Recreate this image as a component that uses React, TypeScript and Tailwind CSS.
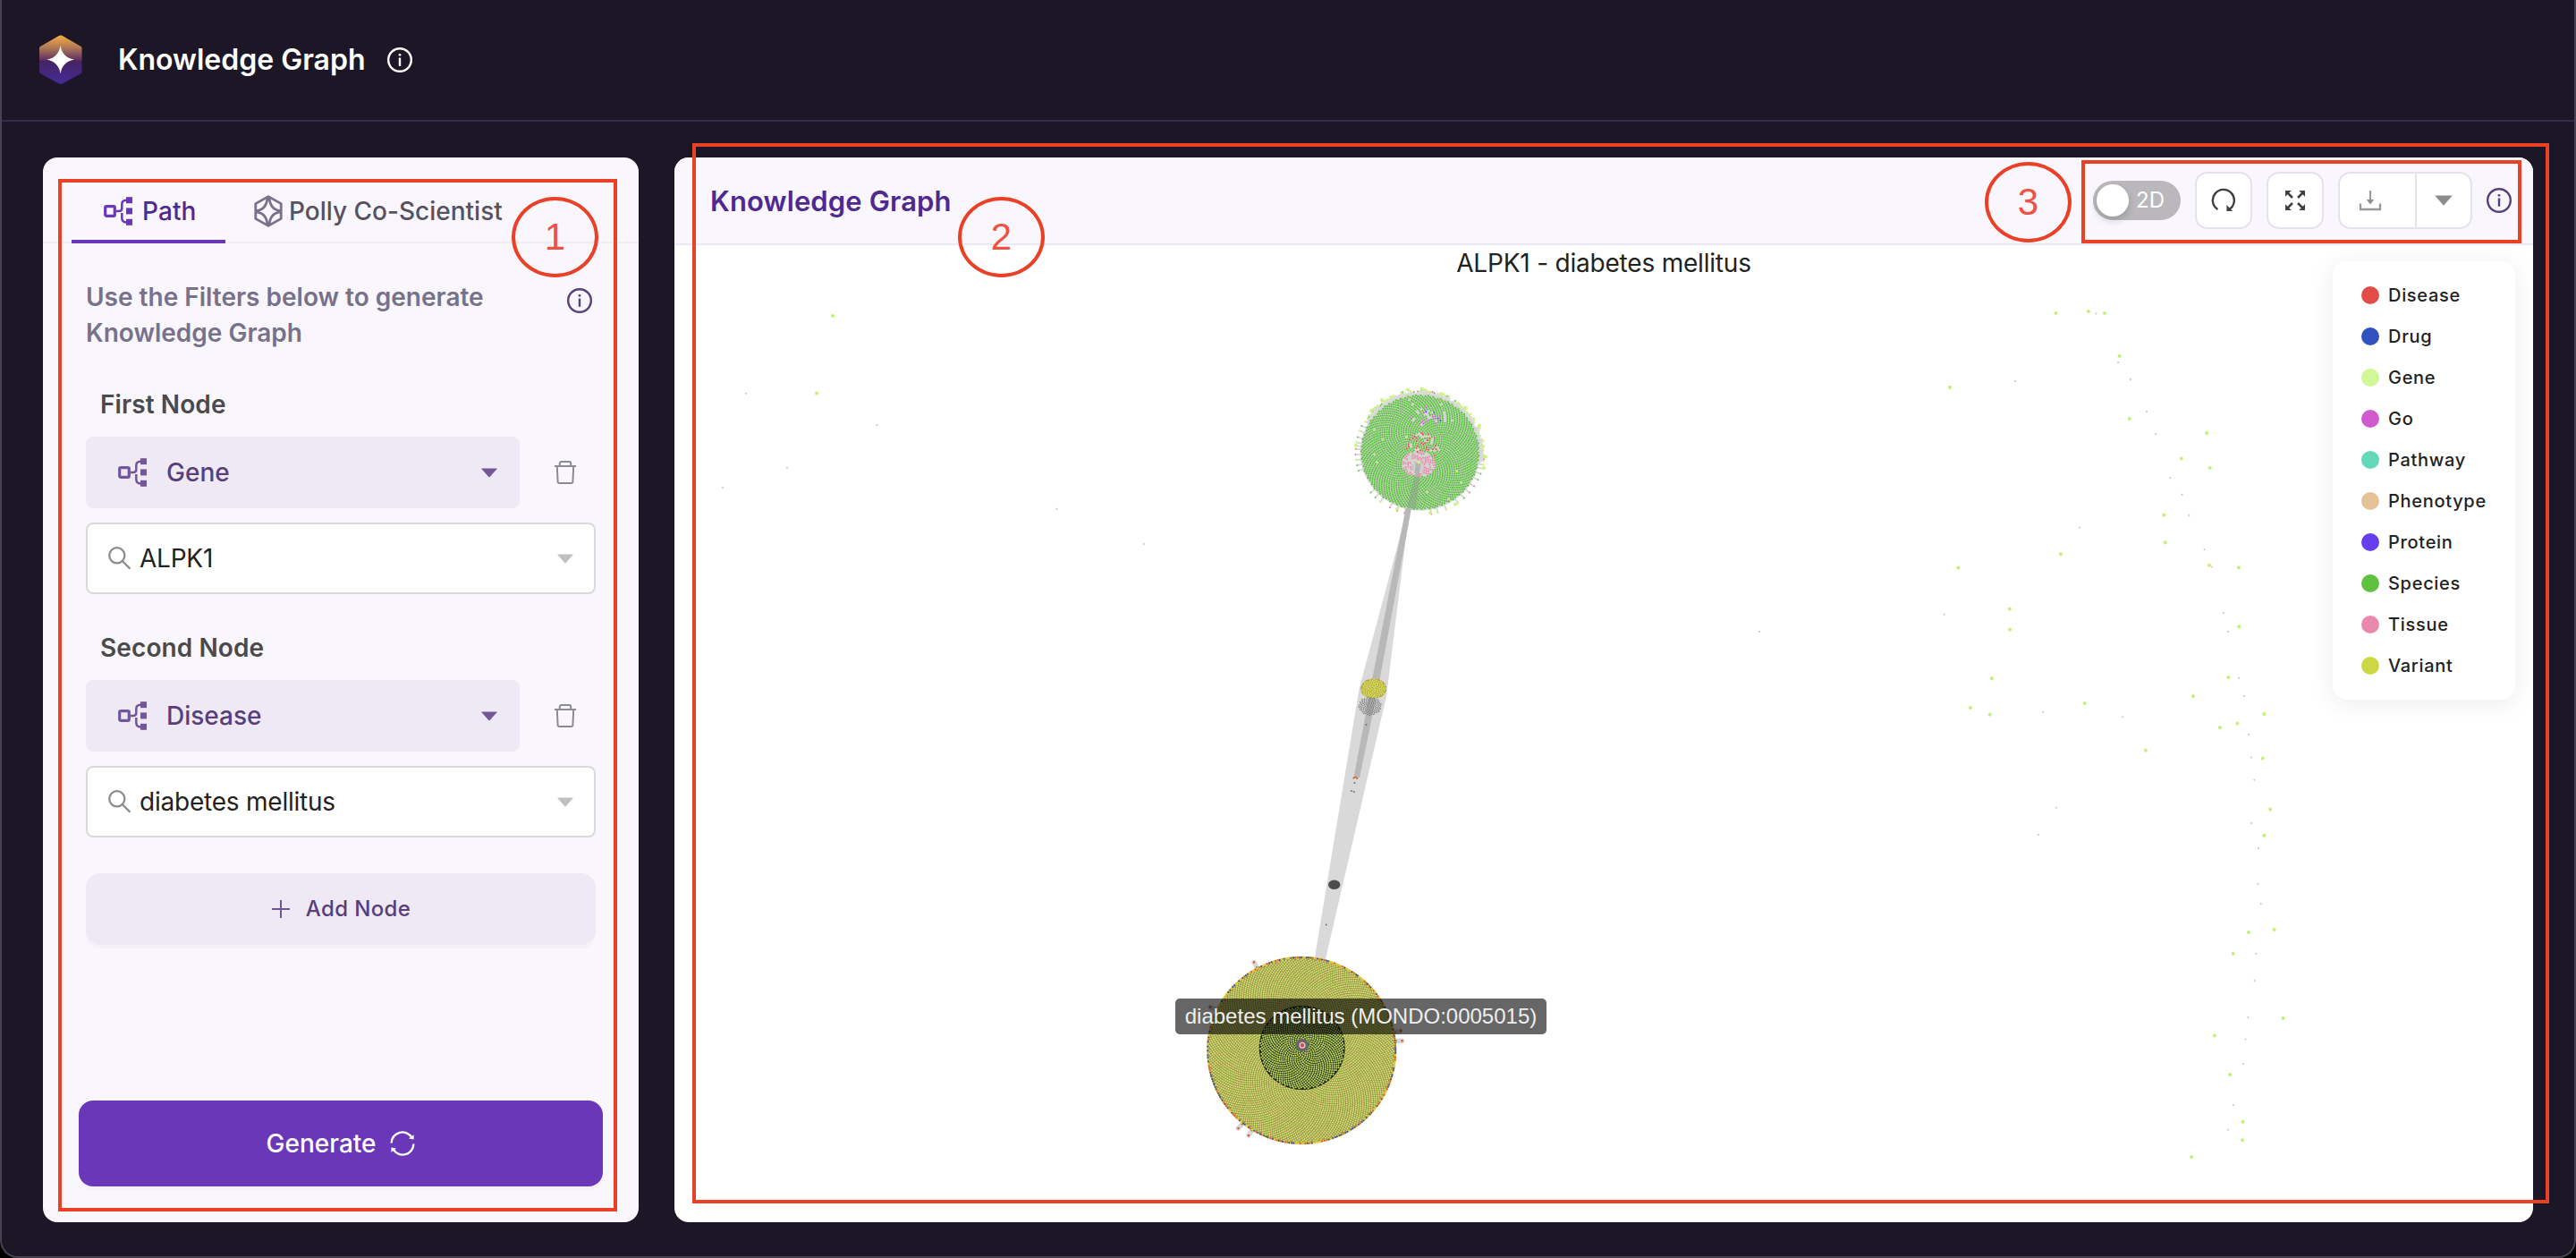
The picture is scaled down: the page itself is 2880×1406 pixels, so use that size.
import React from "react";

type Pt = [number, number];

/* ---------- icons ---------- */

function Logo() {
  return (
    <svg width="48" height="56" viewBox="0 0 48 56" className="shrink-0">
      <defs>
        <linearGradient id="logo-top" x1="0" y1="0" x2="0" y2="1">
          <stop offset="0" stopColor="#f7ae44" />
          <stop offset="0.5" stopColor="#ad7757" />
          <stop offset="1" stopColor="#592a63" />
        </linearGradient>
        <linearGradient id="logo-bottom" x1="0" y1="0" x2="0" y2="1">
          <stop offset="0" stopColor="#46245c" />
          <stop offset="1" stopColor="#452a9c" />
        </linearGradient>
      </defs>
      <path d="M22.3 0.8 Q23.8 0 25.3 0.8 L46.6 13 Q47.6 13.7 47.6 15 V29 H0 V15 Q0 13.7 1 13 Z" fill="url(#logo-top)" />
      <path d="M0 29.5 Q12 27 23.8 27 Q36 27 47.6 29.5 V41 Q47.6 42.3 46.6 43 L25.3 54.7 Q23.8 55.5 22.3 54.7 L1 43 Q0 42.3 0 41 Z" fill="url(#logo-bottom)" />
      <path d="M23.6 12 Q25.4 25 39 27.6 Q25.4 30.5 23.6 43.5 Q21.6 30.5 8.4 27.6 Q21.6 25 23.6 12 Z" fill="#fff" />
    </svg>
  );
}

function InfoIcon({ color }: { color: string }) {
  return (
    <svg width="28" height="28" viewBox="0 0 28 28" fill="none" className="shrink-0">
      <circle cx="14" cy="14" r="12.8" stroke={color} strokeWidth="2.4" />
      <path d="M14 11.6 V20.8" stroke={color} strokeWidth="2.4" />
      <circle cx="14" cy="8.3" r="1.4" fill={color} />
    </svg>
  );
}

function PathIcon({ color }: { color: string }) {
  return (
    <svg width="32" height="32" viewBox="0 0 32 32" fill="none" className="shrink-0">
      <rect x="1.7" y="10.7" width="10.6" height="10.6" rx="1.4" stroke={color} strokeWidth="3.2" />
      <path d="M14 16 H17 Q20.3 16 20.3 12.5 V8.5 Q20.3 3.8 25 3.8" stroke={color} strokeWidth="2.5" />
      <path d="M20.3 18 V23.5 Q20.3 28.4 25 28.4" stroke={color} strokeWidth="2.5" />
      <rect x="25" y="0.2" width="7" height="7" fill={color} />
      <rect x="25" y="12.4" width="7" height="7" fill={color} />
      <rect x="25" y="24.8" width="7" height="7" fill={color} />
    </svg>
  );
}

function PollyIcon() {
  return (
    <svg width="32" height="36" viewBox="0 0 32 36" fill="none" stroke="#77718a" strokeWidth="2.8" strokeLinejoin="round" className="shrink-0">
      <path d="M16 1.6 L30.2 9.6 V26.4 L16 34.4 L1.8 26.4 V9.6 Z" />
      <path d="M15 2 C14.6 11 11 17 2 17.6 M2 18.8 C11 19.5 14.6 25 15 34" />
      <path d="M17 2 C17.4 11 21 17 30 17.6 M30 18.8 C21 19.5 17.4 25 17 34" />
    </svg>
  );
}

function TrashIcon() {
  return (
    <svg width="24" height="26" viewBox="0 0 24 26" fill="none" stroke="#8c8b8d" strokeWidth="2" className="shrink-0">
      <path d="M0 6 H24" />
      <path d="M5.8 6 V3 Q5.8 1.1 7.6 1.1 H16.4 Q18.2 1.1 18.2 3 V6" />
      <path d="M2.8 6 L3.6 23.2 Q3.7 24.9 5.4 24.9 H18.6 Q20.3 24.9 20.4 23.2 L21.2 6" />
    </svg>
  );
}

function SearchIcon() {
  return (
    <svg width="26" height="26" viewBox="0 0 26 26" fill="none" stroke="#8c8b8d" strokeWidth="2.3" className="-ml-px shrink-0">
      <circle cx="9.8" cy="9.8" r="8.6" />
      <path d="M15.8 16 L24.4 24.6" />
    </svg>
  );
}

function Caret({ color, className = "" }: { color: string; className?: string }) {
  return (
    <svg width="18" height="11" viewBox="0 0 18 11" className={`shrink-0 ${className}`}>
      <path d="M0.8 0.5 H17.2 Q17.8 0.5 17.4 1.2 L9.7 10 Q9 10.7 8.3 10 L0.6 1.2 Q0.2 0.5 0.8 0.5 Z" fill={color} />
    </svg>
  );
}

function SyncIcon() {
  return (
    <svg width="28" height="28" viewBox="0 0 28 28" fill="none" stroke="#fff" strokeWidth="2.4" className="shrink-0">
      <path d="M1.6 13.4 A12.2 12.2 0 0 1 24.4 7.6" />
      <path d="M26.4 14.6 A12.2 12.2 0 0 1 3.6 20.4" />
      <path d="M26.6 4.2 V9.4 L21 8.6 Z" fill="#fff" stroke="none" />
      <path d="M1.4 23.8 V18.6 L7 19.4 Z" fill="#fff" stroke="none" />
    </svg>
  );
}

function ReloadIcon() {
  return (
    <svg width="28" height="28" viewBox="0 0 28 28" fill="none" className="shrink-0">
      <path d="M7.4 24 A12 12 0 1 1 20.6 23.8" stroke="#414042" strokeWidth="2.4" />
      <path d="M17.4 19 V26 H24 Z" fill="#414042" />
    </svg>
  );
}

function ExpandIcon() {
  return (
    <svg width="24" height="24" viewBox="0 0 24 24" fill="none" className="shrink-0">
      <path d="M3 3 L9 9 M21 3 L15 9 M3 21 L9 15 M21 21 L15 15" stroke="#414042" strokeWidth="2.6" />
      <path d="M1 1 H7.8 L1 7.8 Z M23 1 V7.8 L16.2 1 Z M1 23 V16.2 L7.8 23 Z M23 23 H16.2 L23 16.2 Z" fill="#414042" />
    </svg>
  );
}

function DownloadIcon() {
  return (
    <svg width="26" height="26" viewBox="0 0 26 26" fill="none" className="shrink-0">
      <path d="M2 16.6 V23 H24 V16.6" stroke="#9a999b" strokeWidth="2.4" />
      <path d="M13 2 V13" stroke="#9a999b" strokeWidth="2.1" />
      <path d="M8.8 12 H17.2 L13 17.4 Z" fill="#8c8b8d" />
    </svg>
  );
}

/* ---------- graph drawing ---------- */

function makeRandom(seed: number) {
  let s = seed;
  return () => {
    s = (s * 16807) % 2147483647;
    return s / 2147483647;
  };
}

const dots = (pts: Pt[]) => pts.map(([x, y]) => `M${x.toFixed(1)} ${y.toFixed(1)}h0`).join("");

function spiral(cx: number, cy: number, rx: number, ry: number, n: number): Pt[] {
  const out: Pt[] = [];
  for (let i = 0; i < n; i++) {
    const r = Math.sqrt((i + 0.5) / n);
    const a = i * 2.399963;
    out.push([cx + Math.cos(a) * r * rx, cy + Math.sin(a) * r * ry]);
  }
  return out;
}

const onEllipse = (cx: number, cy: number, rx: number, ry: number, deg: number): Pt => [
  cx + Math.cos((deg * Math.PI) / 180) * rx,
  cy + Math.sin((deg * Math.PI) / 180) * ry,
];

const GENE_DOTS: Pt[] = [
  [2298.6, 350], [2335, 348.2], [2352.9, 350], [2369.6, 397.9], [2180, 432.9], [2380.7, 467.9], [2467.1, 483.9],
  [2438.9, 512.5], [2470.7, 522.9], [2419.3, 575.7], [2420.7, 606.4], [2303.9, 619.3], [2189.3, 634.6], [2470, 631.8],
  [2502.9, 634.3], [2246.8, 680.7], [2247.1, 703.6], [2503.2, 700.4], [2226.8, 758.2], [2491.4, 757.1], [2452.1, 778.2],
  [2330.7, 786.1], [2202.9, 791.1], [2224.6, 798.6], [2531.4, 797.9], [2501.4, 808.6], [2481.8, 813.2], [2398.9, 838.6],
  [2529.6, 847.5], [2538.2, 904.6], [2531.3, 933.8], [2514, 1042], [2542.6, 1039], [2496.6, 1065.8], [2552.6, 1137.9],
  [2475.8, 1157.4], [2493.1, 1201.2], [2507.5, 1253.8], [2507, 1274.3], [2450.2, 1293.1], [931, 353], [913, 439.5],
];

const FAINT_DOTS: Pt[] = [
  [2343.6, 350.5], [2368.1, 405], [2381.8, 424], [2253, 426], [2400, 460], [2410, 485], [2426.4, 534], [2439.6, 552.8],
  [2447.5, 576], [2325, 589.6], [2464.6, 614.3], [2473, 633.6], [2173.6, 686.8], [2486, 685], [2491, 705.7], [2503.2, 757.8],
  [2509, 777.8], [2284.3, 795.7], [2373.2, 801.4], [2514, 820.7], [2517, 846.4], [2520.4, 871.8], [2298.9, 902.8],
  [2278.9, 933], [2517, 920], [2524.8, 948], [2524.4, 987.8], [2527.8, 1010], [2522.6, 1065.8], [2520.5, 1096],
  [2513.5, 1137], [2510.5, 1161.5], [2507.9, 1189], [2497, 1235], [2491, 1262.5], [834, 439.7], [980.5, 475], [880, 522.7],
  [808, 545], [1181.4, 568.7], [1279, 608], [1967, 706],
];

function Dots({ d, color, size }: { d: string; color: string; size: number }) {
  return <path d={d} stroke={color} strokeWidth={size} strokeLinecap="round" fill="none" />;
}

function GreenCluster() {
  const rnd = makeRandom(77);
  const cx = 1587.7;
  const cy = 505.5;
  const inPink = (x: number, y: number) => ((x - 1586.5) / 19) ** 2 + ((y - 519) / 14) ** 2 < 1;
  const inRed = (x: number, y: number) => ((x - 1590) / 19) ** 2 + ((y - 500) / 17) ** 2 < 1;
  const inTop = (x: number, y: number) => ((x - 1598) / 22) ** 2 + ((y - 466) / 11) ** 2 < 1;
  const green: Pt[] = [];
  const pink: Pt[] = [];
  const red: Pt[] = [];
  const violet: Pt[] = [];
  const blue: Pt[] = [];
  const lime: Pt[] = [];
  for (const [x, y] of spiral(cx, cy, 66, 64, 2050)) {
    const v = rnd();
    if (inPink(x, y)) {
      if (v < 0.58) pink.push([x, y]);
    } else if (inRed(x, y)) {
      if (v < 0.24) red.push([x, y]);
      else if (v < 0.29) lime.push([x, y]);
      else if (v < 0.88) green.push([x, y]);
    } else if (inTop(x, y)) {
      if (v < 0.09) violet.push([x, y]);
      else if (v < 0.12) blue.push([x, y]);
      else if (v < 0.86) green.push([x, y]);
    } else if (v < 0.005) lime.push([x, y]);
    else green.push([x, y]);
  }
  const spikes: [Pt, Pt][] = [];
  const limeTips: Pt[] = [];
  const greenTips: Pt[] = [];
  const pinkTips: Pt[] = [];
  for (let a = 210; a < 372; a += 1.7) {
    const reach = 2.5 + rnd() * 3;
    spikes.push([onEllipse(cx, cy, 65, 63, a), onEllipse(cx, cy, 66 + reach, 64 + reach, a)]);
    const tip = onEllipse(cx, cy, 67 + reach, 65 + reach, a);
    const v = rnd();
    if (v < 0.55) limeTips.push(tip);
    else if (v < 0.68) greenTips.push(tip);
    else if (v < 0.74) pinkTips.push(tip);
  }
  for (const a of [15, 20, 26, 33, 40, 47, 54, 66, 74, 80, 104, 111, 118, 128, 134, 140, 163, 168, 173, 178, 183, 186, 189, 194, 200, 205]) {
    spikes.push([onEllipse(cx, cy, 65, 63, a), onEllipse(cx, cy, 71, 69, a)]);
    const v = rnd();
    const tip = onEllipse(cx, cy, 72, 70, a);
    if (v < 0.4) limeTips.push(tip);
    else if (v < 0.7) greenTips.push(tip);
    else pinkTips.push(tip);
  }
  const bigTips: Pt[] = [
    [1574, 435.5], [1589.5, 434.5], [1545, 447], [1533, 459], [1611, 440], [1639, 456], [1654, 475.5], [1661, 510.5],
    [1659, 523], [1627, 563.5], [1562, 569], [1599, 573], [1516, 498],
  ];
  return (
    <g>
      <path d={spikes.map(([p, q]) => `M${p[0].toFixed(1)} ${p[1].toFixed(1)}L${q[0].toFixed(1)} ${q[1].toFixed(1)}`).join("")} stroke="#d8d8d8" strokeWidth="1.9" />
      <ellipse cx={cx} cy={cy} rx="67" ry="65" fill="#d2d4d0" />
      <Dots d={dots(green)} color="#5dc440" size={2.3} />
      <path d="M1584 520 L1589 520 L1583 568 L1573 568 Z" fill="#8e9a8e" opacity="0.45" />
      <Dots d={dots(pink)} color="#f089ad" size={2.2} />
      <Dots d={dots(red)} color="#e94b45" size={2.2} />
      <Dots d={dots(violet)} color="#cf5bcc" size={2.1} />
      <Dots d={dots(blue)} color="#5f3df0" size={2.1} />
      <Dots d={dots(lime)} color="#c5ea7c" size={2.1} />
      <path d="M1579 519 Q1586 512 1592 519 L1590 529 L1581 529 Z" fill="#d0cfd0" />
      <path d="M1583 517 H1588.5 L1587 529 H1581.5 Z" fill="#b3b3b3" />
      <Dots d={dots(limeTips)} color="#c6f17c" size={2.4} />
      <Dots d={dots(greenTips)} color="#67bd4b" size={2} />
      <Dots d={dots(pinkTips)} color="#dd7aa0" size={2} />
      <Dots d={dots([...bigTips, [1586.2, 516.5]])} color="#cdf385" size={4} />
    </g>
  );
}

function YellowCluster() {
  const rnd = makeRandom(4242);
  const cx = 1455.2;
  const cy = 1174;
  const blue: Pt[] = [];
  const red: Pt[] = [];
  for (let a = 0; a < 360; a += 1.35) {
    const v = rnd();
    const p = onEllipse(cx, cy, 105, 104, a + rnd() * 0.4);
    if (v < 0.46) blue.push(p);
    else if (v < 0.68) red.push(p);
  }
  const spikes: [Pt, Pt][] = [
    [[1405, 1081], [1402, 1075.5]], [[1360, 1129], [1353, 1125.5]], [[1560, 1153.5], [1566, 1152.3]],
    [[1561, 1163.5], [1567.5, 1163.3]], [[1388.5, 1256.5], [1384.5, 1261]], [[1399.5, 1263.5], [1396, 1269]],
  ];
  return (
    <g>
      <path d={spikes.map(([p, q]) => `M${p[0]} ${p[1]}L${q[0]} ${q[1]}`).join("")} stroke="#d8d8d8" strokeWidth="5.5" strokeLinecap="round" />
      <Dots d={dots(spikes.map((s) => s[1]))} color="#e2552e" size={2.6} />
      <Dots d={dots(spikes.map((s) => s[0]))} color="#777777" size={2.2} />
      <ellipse cx={cx} cy={cy} rx="105.5" ry="104.5" fill="#a48d48" />
      <Dots d={dots(spiral(cx, cy, 103.5, 102.5, 5600))} color="#c8ea74" size={1.95} />
      <ellipse cx="1455.7" cy="1171" rx="48" ry="47" fill="#25240f" />
      <Dots d={dots(spiral(1455.7, 1171, 47, 46, 1180))} color="#b8d866" size={2.15} />
      <ellipse cx={cx} cy={cy} rx="105" ry="104" fill="none" stroke="#dcc843" strokeWidth="2.4" />
      <Dots d={dots(blue)} color="#384f9c" size={2.1} />
      <Dots d={dots(red)} color="#df5534" size={2.1} />
      <circle cx="1456" cy="1168.3" r="7.3" fill="#696669" />
      <circle cx="1456" cy="1168.3" r="2.9" fill="#e04848" stroke="#d9d3d3" strokeWidth="1.3" />
    </g>
  );
}

function GraphCanvas() {
  return (
    <svg viewBox="754 274 2078 1092" className="block h-full w-full">
      <path d="M1578 552 L1519.5 770 L1469 1076 H1481 L1550 778 L1578 552 Z" fill="#d9d9d9" />
      <GreenCluster />
      <path d="M1571.7 568 H1578 L1541.5 765 L1520 869 H1513.5 L1534.5 757 Z" fill="#b8b8b8" />
      <ellipse cx="1535.7" cy="769.7" rx="14.4" ry="11.2" fill="#b7994a" />
      <Dots d={dots(spiral(1535.7, 769.7, 13.7, 10.7, 92))} color="#cfe055" size={2.1} />
      <Dots d={dots(spiral(1531.7, 789.3, 13, 10.2, 110))} color="#7e7e7e" size={1.6} />
      <Dots d={dots([[1527.5, 810], [1514.5, 875], [1511, 884], [1513.8, 885], [1482.7, 1033.5]])} color="#6f6f6f" size={1.9} />
      <Dots d={dots([[1513.5, 869.5], [1515.3, 868.5], [1517.2, 869.8]])} color="#de5427" size={2.2} />
      <ellipse cx="1491.7" cy="988.7" rx="6.7" ry="5.3" fill="#4d4d4d" />
      <YellowCluster />
      <Dots d={dots(GENE_DOTS)} color="#cdf285" size={4.2} />
      <Dots d={dots(GENE_DOTS)} color="#bdeb68" size={1.8} />
      <Dots d={dots(FAINT_DOTS)} color="#bdbdbd" size={1.9} />
    </svg>
  );
}

/* ---------- panels ---------- */

function NodePicker({ label, kind, value }: { label: string; kind: string; value: string }) {
  return (
    <section className="mt-10">
      <h3 className="pl-4 text-[28px] leading-10 font-semibold tracking-[0.1px] text-[#4a4a4a]">{label}</h3>
      <div className="mt-4 flex items-center">
        <button className="flex h-20 w-[485px] items-center rounded-lg bg-[#efe9f5] pr-[25px] pl-9">
          <PathIcon color="#735699" />
          <span className="ml-[22px] text-[28px] leading-10 font-medium text-[#573f7b]">{kind}</span>
          <Caret color="#735699" className="ml-auto" />
        </button>
        <span className="ml-[39px]">
          <TrashIcon />
        </span>
      </div>
      <div className="mt-4 flex h-20 items-center rounded-lg border-2 border-[#d9d9d9] bg-white pr-[23px] pl-6">
        <SearchIcon />
        <span className="ml-[9px] text-[28px] leading-10 tracking-[-0.22px] text-[#222]">{value}</span>
        <Caret color="#bfbfbf" className="ml-auto" />
      </div>
    </section>
  );
}

function FilterPanel() {
  return (
    <aside className="flex w-[666px] shrink-0 flex-col rounded-2xl bg-[#f9f6fe]">
      <nav className="flex h-24 shrink-0 border-b-2 border-[#f0eef1] pl-8">
        <div className="flex h-24 w-[172px] items-center gap-[11px] border-b-4 border-[#6b37b9] pt-7 pl-9">
          <PathIcon color="#6b37b9" />
          <span className="text-[28px] leading-10 font-medium tracking-[0.1px] text-[#4f2890]">Path</span>
        </div>
        <div className="ml-8 flex h-[92px] items-center gap-[7px] pt-7">
          <PollyIcon />
          <span className="text-[28px] leading-10 font-medium text-[#56525f]">Polly Co-Scientist</span>
        </div>
      </nav>
      <div className="px-12 pt-10">
        <div className="flex items-start justify-between">
          <p className="w-[460px] text-[28px] leading-10 font-semibold text-[#77718a]">
            Use the Filters below to generate Knowledge Graph
          </p>
          <span className="mt-2.5 mr-1">
            <InfoIcon color="#573f7b" />
          </span>
        </div>
        <NodePicker label="First Node" kind="Gene" value="ALPK1" />
        <NodePicker label="Second Node" kind="Disease" value="diabetes mellitus" />
        <button className="mt-10 flex h-20 w-full items-center justify-center gap-[17px] rounded-2xl bg-[#efe9f5] shadow-[0_4px_0_#f4f1f8]">
          <svg width="22" height="22" viewBox="0 0 22 22" stroke="#735699" strokeWidth="2">
            <path d="M11 1 V21 M1 11 H21" />
          </svg>
          <span className="text-[24px] leading-8 font-medium tracking-[0.35px] text-[#573f7b]">Add Node</span>
        </button>
      </div>
      <button className="mx-10 mt-auto mb-10 flex h-24 items-center justify-center gap-4 rounded-2xl bg-[#6b37b9] shadow-[0_4px_0_#f4f1f8]">
        <span className="text-[28px] leading-10 font-medium text-white">Generate</span>
        <SyncIcon />
      </button>
    </aside>
  );
}

const LEGEND = [
  { name: "Disease", dot: "bg-[#e24c47]" },
  { name: "Drug", dot: "bg-[#2f52be]" },
  { name: "Gene", dot: "bg-[#d2f796]" },
  { name: "Go", dot: "bg-[#d05bce]" },
  { name: "Pathway", dot: "bg-[#65d8ba]" },
  { name: "Phenotype", dot: "bg-[#e5c399]" },
  { name: "Protein", dot: "bg-[#653fee]" },
  { name: "Species", dot: "bg-[#60c140]" },
  { name: "Tissue", dot: "bg-[#e98aac]" },
  { name: "Variant", dot: "bg-[#cbd843]" },
];

function Legend() {
  return (
    <ul className="absolute top-[18px] right-5 h-[490px] w-[204px] rounded-2xl bg-white pt-[15px] pl-8 shadow-[0_4px_28px_rgba(0,0,0,0.08)]">
      {LEGEND.map((item) => (
        <li key={item.name} className="flex h-[46px] items-center gap-2.5">
          <span className={`size-5 rounded-full ${item.dot}`} />
          <span className="text-[20px] leading-6 font-medium tracking-[0.7px] text-[#222]">{item.name}</span>
        </li>
      ))}
    </ul>
  );
}

function Toolbar() {
  const square = "flex size-16 items-center justify-center rounded-[14px] border-2 border-[#e5e2ea] bg-white";
  return (
    <div className="flex items-center gap-4">
      <div className="flex h-11 w-[98px] items-center rounded-full bg-[#bab8bd] pl-1">
        <span className="size-9 rounded-full bg-white shadow-[0_4px_8px_rgba(0,35,11,0.2)]" />
        <span className="ml-2 text-[24px] leading-8 text-white">2D</span>
      </div>
      <button className={square}>
        <ReloadIcon />
      </button>
      <button className={square}>
        <ExpandIcon />
      </button>
      <div className="flex h-16 w-[150px] rounded-[14px] border-2 border-[#e5e2ea] bg-white">
        <button className="flex w-[86px] items-center justify-center border-r-2 border-[#e5e2ea] pr-4">
          <DownloadIcon />
        </button>
        <button className="flex flex-1 items-center justify-center">
          <svg width="20" height="12" viewBox="0 0 20 12">
            <path d="M0.2 0.5 H19.8 L10 11.8 Z" fill="#8c8b8d" />
          </svg>
        </button>
      </div>
      <InfoIcon color="#573f7b" />
    </div>
  );
}

function GraphPanel() {
  return (
    <section className="flex min-w-0 flex-1 flex-col overflow-hidden rounded-2xl bg-white">
      <header className="flex h-[98px] shrink-0 items-center justify-between border-b-2 border-[#ece8f5] bg-[#f9f6fe] pr-6 pl-10">
        <h2 className="pt-0.5 text-[31px] leading-10 font-semibold tracking-[0.12px] text-[#4f2890]">Knowledge Graph</h2>
        <Toolbar />
      </header>
      <div className="relative min-h-0 flex-1">
        <GraphCanvas />
        <p className="absolute inset-x-0 top-0 text-center text-[28px] leading-10 tracking-[-0.2px] text-[#222]">
          ALPK1 - diabetes mellitus
        </p>
        <Legend />
        <div className="absolute top-[842px] left-[560px] flex h-10 w-[415px] items-center justify-center rounded-[5px] bg-black/60 font-['Liberation_Sans',sans-serif] text-[24px] leading-8 whitespace-nowrap text-[#eee]">
          diabetes mellitus (MONDO:0005015)
        </div>
      </div>
    </section>
  );
}

/* ---------- numbered callouts ---------- */

function Callout({ n, box, circle }: { n: string; box: string; circle: string }) {
  return (
    <>
      <div className={`pointer-events-none absolute border-4 border-[#ea4025] ${box}`} />
      <div
        className={`pointer-events-none absolute flex h-[90px] w-[97px] items-center justify-center rounded-[50%] border-4 border-[#ea4025] font-['Liberation_Sans',sans-serif] text-[42px] leading-[42px] text-[#ee5242] ${circle}`}
      >
        {n}
      </div>
    </>
  );
}

export default function App() {
  return (
    <div className="relative h-[1406px] w-[2880px] overflow-hidden bg-black font-['Inter',sans-serif]">
      <div className="flex h-full flex-col rounded-b-[20px] border-x-2 border-b-2 border-[#46424e] bg-[#1d1626]">
        <header className="flex h-[136px] shrink-0 items-center border-b-2 border-[#322c4e] pl-[42px]">
          <Logo />
          <h1 className="ml-10 text-[32px] leading-10 font-semibold text-white">Knowledge Graph</h1>
          <span className="ml-6">
            <InfoIcon color="#fff" />
          </span>
        </header>
        <main className="flex min-h-0 flex-1 gap-10 px-[46px] pt-10 pb-[38px]">
          <FilterPanel />
          <GraphPanel />
        </main>
      </div>
      <Callout n="1" box="top-[200px] left-[65px] h-[1154px] w-[625px]" circle="top-[220px] left-[572px]" />
      <Callout n="2" box="top-[160px] left-[774px] h-[1185px] w-[2076px]" circle="top-[220px] left-[1071px]" />
      <Callout n="3" box="top-[179px] left-[2327px] h-[93px] w-[492px]" circle="top-[181px] left-[2219px]" />
    </div>
  );
}
